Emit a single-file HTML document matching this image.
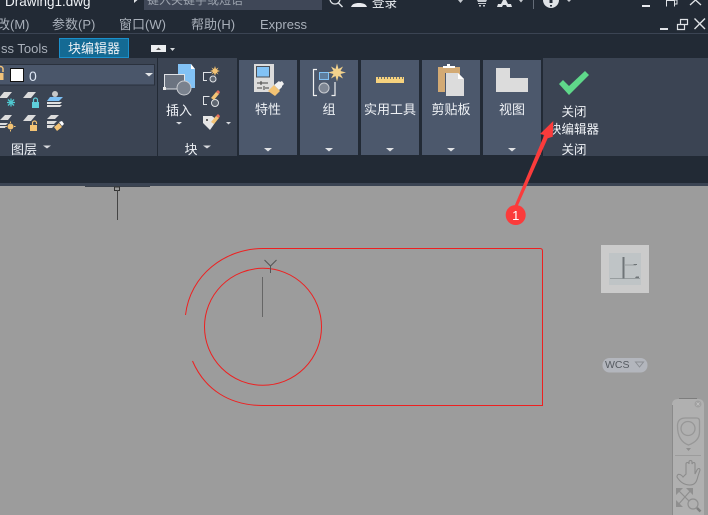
<!DOCTYPE html>
<html><head><meta charset="utf-8"><style>
html,body{margin:0;padding:0;width:708px;height:515px;overflow:hidden;background:#9c9c9c}
svg{display:block}
text{font-family:"Liberation Sans","Noto Sans CJK SC",sans-serif;fill:#eef1f5}
.m{font-size:13px;fill:#a9b0ba}
.l{font-size:13px;text-anchor:middle}
</style></head><body>
<svg width="708" height="515" viewBox="0 0 708 515" xmlns="http://www.w3.org/2000/svg">
<rect width="708" height="515" fill="#9c9c9c"/>
<!-- chrome -->
<rect width="708" height="186" fill="#222a35"/>
<rect y="33" width="708" height="1" fill="#3b4453"/>
<rect y="58" width="708" height="98" fill="#3b4453"/>
<rect y="183" width="708" height="3" fill="#3b4453"/>
<rect x="85" y="186" width="65" height="1" fill="#3a404a"/>
<!-- title bar -->
<text x="5" y="6" style="font-size:13.5px" fill="#e8eaee">Drawing1.dwg</text>
<path d="M134 0h3.500l-3.500 3z" fill="#dfe2e6"/>
<rect x="144" y="0" width="178" height="10" fill="#3f4757"/>
<text x="147" y="4" style="font-size:12px;fill:#9aa1ac">键入关键字或短语</text>
<circle cx="335" cy="-1" r="5" fill="none" stroke="#dfe2e6" stroke-width="1.300"/><path d="M338.500 3l4 4" stroke="#dfe2e6" stroke-width="1.500"/>
<path d="M351 7c1-3 4-4 8-4s7 1 8 4z" fill="#e8eaee"/>
<text x="372" y="7" style="font-size:12.500px">登录</text>
<path d="M458 0h5l-2.500 3z" fill="#c5c9cf"/>
<path d="M477 0h10l-1 2h-8zM478 3h8v1h-8zM479 5h2v1.500h-2zM483 5h2v1.500h-2z" fill="#c5c9cf"/>
<path d="M497 7l1-3h3l2-4h3l2 4h3l1 3h-5l-1-2h-3l-1 2z" fill="#dfe2e6"/>
<path d="M519 0h4l-2 2.500z" fill="#c5c9cf"/>
<rect x="533" y="0" width="1" height="9" fill="#646c78"/>
<circle cx="551" cy="0" r="8" fill="#dfe2e6"/><path d="M549.500 0h3v3h-3zM550 5h2v1.500h-2z" fill="#222a35"/>
<path d="M567 0h4l-2 2z" fill="#c5c9cf"/>
<rect x="642" y="5" width="8" height="2" fill="#e8eaee"/>
<path d="M666.500 6.500v-6h8v6M670 0h7v4h-2" fill="none" stroke="#dfe2e6"/>
<path d="M690 5l5.500-5 5.500 5" fill="none" stroke="#dfe2e6" stroke-width="1.300"/>
<!-- menu -->
<text class="m" x="-3" y="29">改(M)</text>
<text class="m" x="52" y="29">参数(P)</text>
<text class="m" x="119" y="29">窗口(W)</text>
<text class="m" x="191" y="29">帮助(H)</text>
<text class="m" x="260" y="29">Express</text>
<rect x="660" y="28" width="8" height="2" fill="#dfe2e6"/>
<path d="M677.500 24.500h7v5h-7zM680.500 24v-4.500h7v5h-3" fill="none" stroke="#dfe2e6" stroke-width="1.200"/>
<path d="M694.500 18.500l10.500 10.500M705 18.500l-10.500 10.500" stroke="#dfe2e6" stroke-width="1.400"/>
<!-- tabs -->
<text x="1" y="53" style="font-size:13px;fill:#a9b0ba">ss Tools</text>
<rect x="59.500" y="38.500" width="69" height="19" fill="#146a94" stroke="#1b90cc"/>
<text x="94" y="53" class="l" style="font-size:13px">块编辑器</text>
<rect x="151" y="45" width="15" height="7" fill="#eceef0"/><path d="M156 50h5l-2.500-2.500z" fill="#555"/>
<path d="M170 48h5l-2.500 3z" fill="#d5d8dc"/>
<!-- ribbon: panels -->
<rect x="157" y="58" width="1" height="98" fill="#222a35"/>
<rect x="237" y="58" width="306" height="98" fill="#222a35"/>
<g fill="#4c586c">
<rect x="239" y="60" width="58" height="95"/><rect x="300" y="60" width="58" height="95"/><rect x="361" y="60" width="58" height="95"/><rect x="422" y="60" width="58" height="95"/><rect x="483" y="60" width="58" height="95"/>
</g>
<!-- layer combo -->
<rect x="-2" y="64.500" width="156.500" height="20.500" fill="#4a566a" stroke="#2a313d"/>
<path d="M-2 72v-3a2.500 2.500 0 0 1 5 0v3" fill="none" stroke="#f1c27a" stroke-width="1.500"/>
<path d="M-2 73h5.500v7h-5.500z" fill="#f1c27a"/>
<rect x="10.500" y="68.500" width="13" height="13" fill="#fff" stroke="#111"/>
<text x="29" y="81" style="font-size:14px;fill:#dfe8f5">0</text>
<path d="M145 73h8l-4 3.500z" fill="#e3e5e8"/>
<!-- layer icons row 1 -->
<path d="M-1 98l5-6h8l-5 6z" fill="#dcdcdc"/>
<path d="M23 98l5-6h8l-5 6z" fill="#dcdcdc"/>
<g stroke="#4fc8d0" stroke-width="1.300" fill="none"><path d="M7 102.500h8M11 98.500v8M8 99.500l6 6M14 99.500l-6 6"/></g>
<rect x="32" y="102" width="7" height="6" fill="#5ed0dc"/><path d="M33.500 102v-2a2 2 0 0 1 4 0v2" fill="none" stroke="#5ed0dc" stroke-width="1.200"/>
<circle cx="55" cy="94" r="3" fill="#c8c8c8"/>
<path d="M50 97h13l-4 4h-12z" fill="#7cc0f5"/><path d="M47 102h15l-2 2h-13zM47 105h15l-2 2h-13z" fill="#e0e0e0"/>
<!-- row 2 -->
<path d="M0 120l5-5h7l-4 5zM-1 123h9l-2 2h-7zM-1 126h7l-1 2h-6z" fill="#dcdcdc"/>
<circle cx="10.500" cy="126.500" r="3" fill="#f3c374"/>
<path d="M10.500 121.500v1.500M10.500 130v1.500M5.500 126.500h1.500M14 126.500h1.500" stroke="#f3c374"/>
<path d="M23 121l5-6h8l-5 6z" fill="#dcdcdc"/>
<rect x="30" y="125" width="7" height="6" fill="#f3c374"/><path d="M32.500 125v-2a2 2 0 0 1 4 0v1" fill="none" stroke="#f3c374" stroke-width="1.200"/>
<path d="M51 115h8l-4 4h-8zM47 121h10l-3 3h-7zM47 125h8l-3 3h-5z" fill="#dcdcdc"/>
<path d="M54 127l5-4 3 4-5 4z" fill="#f3c374"/><path d="M59 122l3-1 2 3-2 2z" fill="#fff"/>
<text x="24" y="154" class="l" style="font-size:13px">图层</text>
<path d="M43 145.500h8l-4 3z" fill="#d8dade"/>
<!-- insert block -->
<path d="M178 64h13l4 5v19h-17z" fill="#82c2f5"/>
<path d="M191 64v5h4z" fill="#fff"/>
<rect x="164.500" y="74.500" width="20" height="14.500" fill="#6b7380" stroke="#dfe2e6"/>
<rect x="163" y="87" width="3" height="3" fill="#e8e8e8"/>
<circle cx="184" cy="88" r="7" fill="#7a828e" stroke="#c8cbd0" stroke-width="1"/>
<text x="179" y="115" class="l" style="font-size:13px">插入</text>
<path d="M176 122h6l-3 2.500z" fill="#d5d8dc"/>
<!-- small block icons -->
<g fill="none" stroke="#dfe2e6" stroke-width="1">
<path d="M207 80.500h-3.500v-8h8"/><circle cx="213" cy="79" r="3" fill="#5d6570"/>
<path d="M207 104.500h-3.500v-8h6"/><circle cx="215" cy="103" r="3.500" fill="#5d6570"/>
</g>
<path d="M215 66l1 3 2.500-1.500-1.500 2.500 3 1-3 1 1.500 2.500-2.500-1.500-1 3-1-3-2.500 1.500 1.500-2.500-3-1 3-1-1.500-2.500 2.500 1.500z" fill="#f3c374"/>
<path d="M211 98l5-6 3 2-5 6z" fill="#f3c374"/><path d="M216 92l2-2 2 2-1 2z" fill="#e8705c"/>
<path d="M203 116h9l5 4-7 10-7-7z" fill="#e6e6e6"/><circle cx="207" cy="120" r="1" fill="#333"/>
<path d="M211 122l5-6 3 2-5 6z" fill="#f3c374"/><path d="M216 116l2-2 2 2-1 2z" fill="#e8705c"/>
<path d="M226 122h5l-2.500 2.500z" fill="#d5d8dc"/>
<text x="191" y="154" class="l" style="font-size:13px">块</text>
<path d="M203 145.500h8l-4 3z" fill="#d8dade"/>
<!-- 特性 icon -->
<rect x="254" y="64" width="20" height="28" fill="#dcdcdc"/>
<rect x="256.500" y="66.500" width="13" height="10.500" fill="#82c2f5" stroke="#4a4f57"/>
<path d="M257 83h11M257 88h5M265 88h4M261 81v4M264 86v4" stroke="#444" stroke-width="1"/>
<path d="M268 91l6-6 6 6-5 5z" fill="#f3c374"/><path d="M274 85l5-4 1 1 2-1 2 3-2 2 0 1-3 3z" fill="#f0f0f0"/>
<text x="268" y="114" class="l" style="font-size:13px">特性</text>
<path d="M264 148h8l-4 3.500z" fill="#dfe1e4"/>
<!-- 组 icon -->
<path d="M317 69.500h-3.500v26h3.500M335 82v13.500h-3.500" fill="none" stroke="#f0f0f0" stroke-width="1.200"/>
<rect x="319.500" y="72.500" width="9" height="7" fill="#5f7d9c" stroke="#82c2f5"/>
<circle cx="324" cy="88" r="5" fill="#7f8794" stroke="#c8cbd0"/>
<path d="M337 63.500l1.500 5.500 4.500-2.500-2.500 4.500 5.500 1.500-5.500 1.500 2.500 4.500-4.500-2.500-1.500 5.500-1.500-5.500-4.500 2.500 2.500-4.500-5.500-1.500 5.500-1.500-2.500-4.500 4.500 2.500z" fill="#f3d28c"/>
<text x="329" y="114" class="l" style="font-size:13px">组</text>
<path d="M325 148h8l-4 3.500z" fill="#dfe1e4"/>
<!-- ruler -->
<rect x="376" y="77" width="28" height="6" fill="#f6d27e"/>
<path d="M378.500 77v2M381.500 77v2M384.500 77v2M387.500 77v2M390.500 77v2M393.500 77v2M396.500 77v2M399.500 77v2M402.500 77v2" stroke="#4c586c" stroke-width=".8"/>
<text x="390" y="114" class="l" style="font-size:13px">实用工具</text>
<path d="M386 148h8l-4 3.500z" fill="#dfe1e4"/>
<!-- clipboard -->
<rect x="438" y="67" width="22" height="25" fill="#d3aa74"/>
<path d="M443 66h4v-2h3v2h5v2h-12z" fill="#fff"/>
<path d="M446 73h12l6 6v17h-18z" fill="#dcdcdc"/>
<path d="M445.500 73v23" stroke="#4c586c"/>
<path d="M458 73l6 6h-6z" fill="#fff"/>
<text x="451" y="114" class="l" style="font-size:13px">剪贴板</text>
<path d="M447 148h8l-4 3.500z" fill="#dfe1e4"/>
<!-- view -->
<path d="M496 68h14v10h18v14h-32z" fill="#dcdcdc"/>
<text x="512" y="114" class="l" style="font-size:13px">视图</text>
<path d="M508 148h8l-4 3.500z" fill="#dfe1e4"/>
<!-- close -->
<path d="M559 84l4-4 6 6 16-15 4 4-20 20z" fill="#5fd88a"/>
<text x="574" y="116" class="l" style="font-size:12.500px">关闭</text>
<text x="574" y="133.500" class="l" style="font-size:12.500px">块编辑器</text>
<text x="574" y="154" class="l" style="font-size:12.500px">关闭</text>
<!-- drawing -->
<rect x="114.500" y="187" width="5" height="3.500" fill="none" stroke="#333"/>
<rect x="117" y="190" width="1" height="30" fill="#444"/>
<g fill="none" stroke="#ee2020" stroke-width="1">
<path d="M185.500 315C190 275 225 248.500 263 248.500H540Q542.500 248.500 542.500 251V405.500H263C230 405.500 205 390 192.500 361"/>
<circle cx="263" cy="326.800" r="58.500"/>
</g>
<path d="M264.500 260l6 6 6-6M270.500 266v7" fill="none" stroke="#555" stroke-width="1"/>
<rect x="262" y="277" width="1" height="40" fill="#666"/>
<!-- view cube -->
<rect x="601" y="245" width="48" height="48" fill="#cbcbcb"/>
<rect x="609" y="253" width="32" height="32" fill="#bfc4c6"/>
<rect x="622.500" y="257" width="2" height="22" fill="#6f7578"/>
<path d="M610 278.500h30M625 265h11" stroke="#8a9092" stroke-width=".7"/>
<path d="M633 265h4v-1h-3zM635 278h4v-1.500h-3z" fill="#6f7578"/>
<rect x="602.500" y="358" width="45" height="14.500" rx="7" fill="#b3b6bd"/>
<text x="605" y="368" style="font-size:10.500px;fill:#555a60">WCS</text>
<path d="M635.500 362h8l-4 5z" fill="none" stroke="#8b8e94"/>
<!-- nav bar -->
<path d="M672 515V405q0-6 6-6h20q6 0 6 6V515z" fill="#b0b0b0"/>
<path d="M672.500 405V515" stroke="#8a8a8a"/>
<rect x="679" y="398" width="18" height="1" fill="#7d7d7d"/>
<circle cx="698" cy="404" r="3.500" fill="#a0a0a0"/><path d="M696.500 402.500l3 3m0-3l-3 3" stroke="#c8c8c8" stroke-width=".7"/>
<path d="M677.500 426q0-8 8-8h11q3 0 3 3v11q0 9-11 13-11-4-11-19z" fill="none" stroke="#979797" stroke-width="1.300"/>
<circle cx="688" cy="428.500" r="7" fill="none" stroke="#979797" stroke-width="1.300"/>
<path d="M686 448h5l-2.500 3z" fill="#8e8e8e"/>
<rect x="675" y="455" width="26" height="1" fill="#9c9c9c"/>
<path d="M677 477c3 5 7 8 13 8 6 0 7-5 8-9l2-6c0-2-2-2-3 0l-2 4v-10c0-2-2-2-3 0v-2c0-2-3-2-3 0v2c0-2-3-2-3 0v10l-3 3c-2-3-6-4-6 0z" fill="none" stroke="#8c8c8c" stroke-width="1.100"/>
<path d="M677 489l15 15M692 489l-15 17" stroke="#8f8f8f" stroke-width="1.200"/>
<path d="M676 488h7l-7 7zM693 488h-7l7 7zM676 507h7l-7-7z" fill="#8f8f8f"/>
<circle cx="693" cy="504" r="5" fill="#b0b0b0" stroke="#8f8f8f" stroke-width="1.200"/>
<path d="M697 508l3.500 3.500" stroke="#808080" stroke-width="2.500"/>
<!-- annotation -->
<path d="M553.300 121L540 134 544.300 135 514.500 206 517.700 206 547.700 138.300 552.700 136.700Z" fill="#fb3b3b"/>
<circle cx="515.700" cy="215" r="10" fill="#fb3b3b"/>
<text x="515.700" y="220" style="font-size:13px;fill:#fff;text-anchor:middle">1</text>
</svg>
</body></html>
